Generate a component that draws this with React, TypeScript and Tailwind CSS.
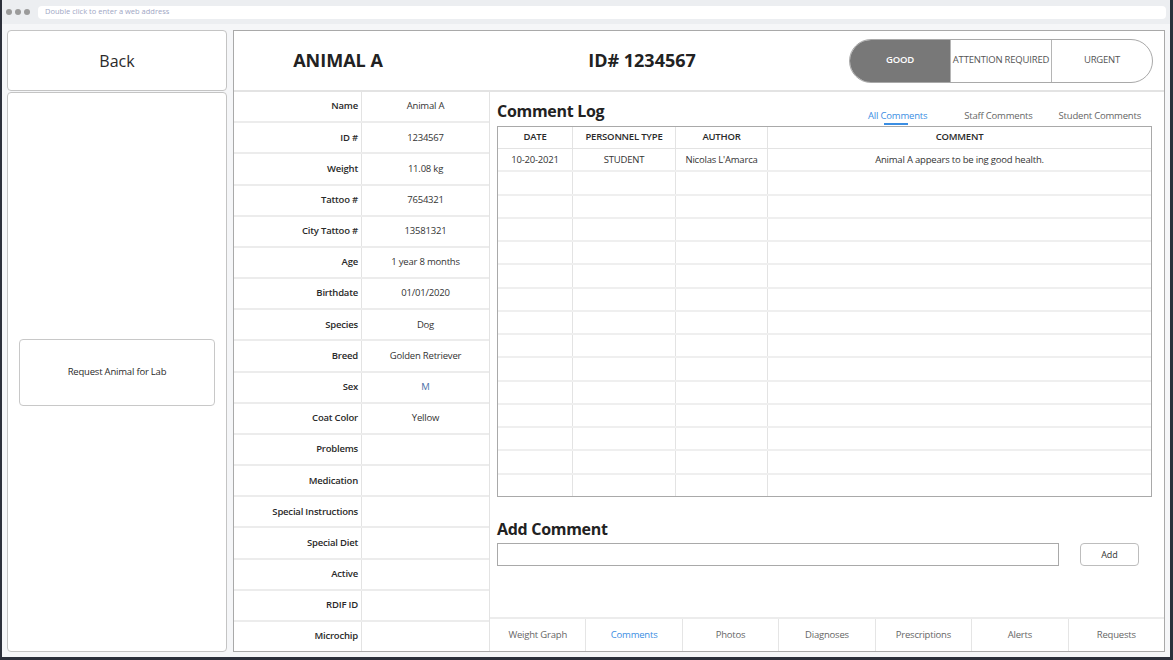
const details: [string, string][] = [
  ["Name", "Animal A"],
  ["ID #", "1234567"],
  ["Weight", "11.08 kg"],
  ["Tattoo #", "7654321"],
  ["City Tattoo #", "13581321"],
  ["Age", "1 year 8 months"],
  ["Birthdate", "01/01/2020"],
  ["Species", "Dog"],
  ["Breed", "Golden Retriever"],
  ["Sex", "M"],
  ["Coat Color", "Yellow"],
  ["Problems", ""],
  ["Medication", ""],
  ["Special Instructions", ""],
  ["Special Diet", ""],
  ["Active", ""],
  ["RDIF ID", ""],
  ["Microchip", ""],
];

const comments = [
  ["10-20-2021", "STUDENT", "Nicolas L'Amarca", "Animal A appears to be ing good health."],
];

const bottomTabs = ["Weight Graph", "Comments", "Photos", "Diagnoses", "Prescriptions", "Alerts", "Requests"];

function StatusToggle() {
  return (
    <div className="flex w-[304px] h-[44px] rounded-full border border-[#a9a9a9] overflow-hidden text-[9.5px] tracking-[-0.2px] whitespace-nowrap">
      <div className="flex-1 flex items-center justify-center bg-[#787878] text-white font-semibold">GOOD</div>
      <div className="flex-1 flex items-center justify-center border-l border-[#b5b5b5] text-[#555]">ATTENTION REQUIRED</div>
      <div className="flex-1 flex items-center justify-center border-l border-[#b5b5b5] text-[#555]">URGENT</div>
    </div>
  );
}

function DetailsTable() {
  return (
    <div className="w-[256px] flex flex-col border-r border-[#e3e3e3] text-[9.5px] tracking-[-0.2px]">
      {details.map(([label, value], i) => (
        <div
          key={label}
          className={`flex-1 flex ${i < details.length - 1 ? "border-b-2 border-[#ececec]" : ""}`}
        >
          <div className="w-[128px] flex items-center justify-end pr-[3px] font-semibold text-[#2a2a2a] border-r border-[#e3e3e3]">
            {label}
          </div>
          <div className={`flex-1 flex items-center justify-center ${label === "Sex" ? "text-[#4a70a8]" : "text-[#333]"}`}>
            {value}
          </div>
        </div>
      ))}
    </div>
  );
}

function CommentTable() {
  const rows = Array.from({ length: 15 }, (_, i) => comments[i] ?? ["", "", "", ""]);
  const cols = ["w-[74px]", "w-[103px]", "w-[92px]", "flex-1"];
  return (
    <div className="h-[371px] flex flex-col border border-[#a9a9a9] text-[9.5px] tracking-[-0.2px]">
      <div className="h-[22px] flex border-b border-[#e3e3e3] font-semibold text-[#2a2a2a]">
        {["DATE", "PERSONNEL TYPE", "AUTHOR", "COMMENT"].map((h, i) => (
          <div key={h} className={`${cols[i]} flex items-center justify-center ${i > 0 ? "border-l border-[#e3e3e3]" : ""}`}>
            {h}
          </div>
        ))}
      </div>
      {rows.map((r, ri) => (
        <div key={ri} className={`flex-1 flex ${ri < rows.length - 1 ? "border-b-2 border-[#efefef]" : ""}`}>
          {r.map((c, i) => (
            <div key={i} className={`${cols[i]} flex items-center justify-center text-[#333] ${i > 0 ? "border-l border-[#e3e3e3]" : ""}`}>
              {c}
            </div>
          ))}
        </div>
      ))}
    </div>
  );
}

export default function App() {
  return (
    <div
      className="w-[1173px] h-[660px] flex flex-col border-l-2 border-r-[3px] border-b-[3px] border-[#2c303b] bg-[#f5f6f8] overflow-hidden"
      style={{ fontFamily: '"Open Sans", "Noto Sans", sans-serif' }}
    >
      <div className="h-[24px] flex items-center bg-[#eceef1] pl-[4px] pr-[4px] gap-[3px]">
        <span className="w-[6px] h-[6px] rounded-full bg-[#9b9b9b]" />
        <span className="w-[6px] h-[6px] rounded-full bg-[#9b9b9b]" />
        <span className="w-[6px] h-[6px] rounded-full bg-[#9b9b9b]" />
        <div className="ml-[5px] flex-1 h-[13px] bg-white rounded-sm flex items-center pl-[7px] text-[7.5px] text-[#a0a6c4]">
          Double click to enter a web address
        </div>
      </div>

      <div className="flex-1 flex pt-[6px] pb-[5px] pl-[5px] pr-[5px] gap-[6px]">
        <div className="w-[220px] flex flex-col gap-[1px]">
          <div className="h-[61px] flex items-center justify-center bg-white border border-[#c4c4c4] rounded-sm text-[16px] text-[#2a2a2a]">
            Back
          </div>
          <div className="flex-1 flex items-center px-[11px] bg-white border border-[#c4c4c4] rounded-sm">
            <div className="w-full h-[67px] flex items-center justify-center border border-[#c8c8c8] rounded text-[9.5px] tracking-[-0.2px] text-[#2a2a2a]">
              Request Animal for Lab
            </div>
          </div>
        </div>

        <div className="flex-1 flex flex-col bg-white border border-[#a9a9a9]">
          <div className="h-[61px] flex items-center border-b-2 border-[#e3e3e3]">
            <div className="w-[208px] text-center text-[18px] font-bold text-[#222]">ANIMAL A</div>
            <div className="w-[400px] text-center text-[18px] font-bold text-[#222]">ID# 1234567</div>
            <div className="ml-[7px]">
              <StatusToggle />
            </div>
          </div>

          <div className="flex-1 flex">
            <DetailsTable />
            <div className="flex-1 flex flex-col">
              <div className="flex-1 pl-[7px] pr-[12px] pt-[8px]">
                <div className="flex items-end justify-between h-[26px]">
                  <h2 className="text-[16px] font-bold text-[#222] leading-none mb-[7px] tracking-[-0.3px]">Comment Log</h2>
                  <div className="flex text-[9.5px] tracking-[-0.2px] text-[#666] pr-[11px]">
                    <div className="relative mr-[37px] text-[#3b8ee3] pb-[3px]">
                      All Comments
                      <span className="absolute left-[16px] bottom-[1px] w-[24px] h-[2px] bg-[#3b8ee3]" />
                    </div>
                    <div className="mr-[26px] pb-[3px]">Staff Comments</div>
                    <div className="pb-[3px]">Student Comments</div>
                  </div>
                </div>
                <CommentTable />
                <h2 className="mt-[24px] text-[16px] font-bold text-[#222] leading-none tracking-[-0.3px]">Add Comment</h2>
                <div className="mt-[6px] flex items-center">
                  <input className="w-[562px] h-[23px] border border-[#a9a9a9] outline-none px-2 text-[10px]" />
                  <button className="ml-[21px] w-[59px] h-[23px] border border-[#bdbdbd] rounded-sm text-[9px] text-[#333] bg-white">
                    Add
                  </button>
                </div>
              </div>
              <div className="h-[34px] flex border-t-2 border-[#ececec] text-[9.5px] tracking-[-0.2px]">
                {bottomTabs.map((t, i) => (
                  <div
                    key={t}
                    className={`flex-1 flex items-center justify-center ${i > 0 ? "border-l border-[#e5e5e5]" : ""} ${t === "Comments" ? "text-[#3b8ee3]" : "text-[#666]"}`}
                  >
                    {t}
                  </div>
                ))}
              </div>
            </div>
          </div>
        </div>
      </div>
    </div>
  );
}
